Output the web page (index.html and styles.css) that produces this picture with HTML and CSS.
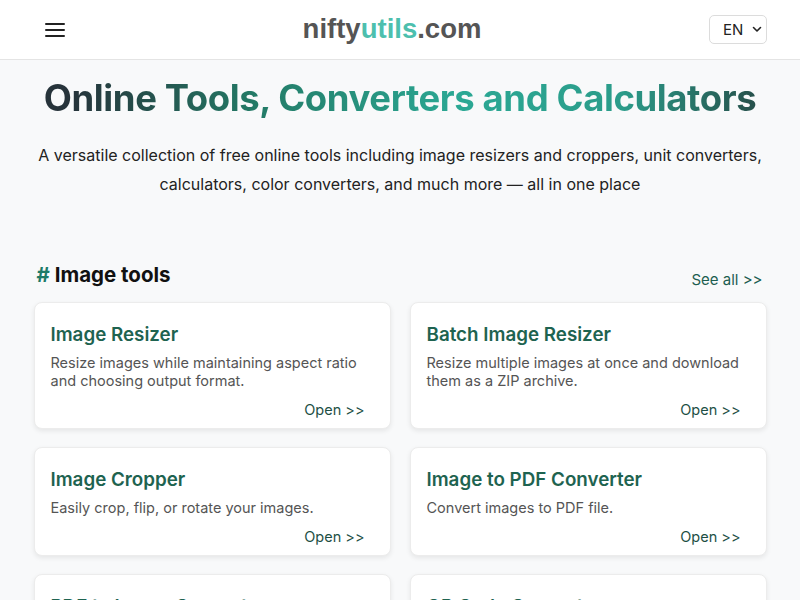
FILE: index.html
```html
<!DOCTYPE html>
<html lang="en">
<head>
  <meta charset="UTF-8" />
  <meta name="viewport" content="width=device-width, initial-scale=1.0"/>
  <title>niftyutils.com - Online Tools, Converters and Calculators</title>
  <link rel="stylesheet" href="styles.css">
</head>
<body>

  <!-- Top bar -->
  <header class="topbar">
    <button class="menu-btn" aria-label="Menu">
      <svg width="20" height="16" viewBox="0 0 20 16">
        <path d="M1 2h18M1 8h18M1 14h18" stroke="#222" stroke-width="2" stroke-linecap="round"/>
      </svg>
    </button>
    <a class="logo" href="#">nifty<span>utils</span>.com</a>
    <div class="lang">
      EN
      <svg width="10" height="7" viewBox="0 0 10 7">
        <path d="M1.5 1.5L5 5l3.5-3.5" fill="none" stroke="#222" stroke-width="1.6" stroke-linecap="round" stroke-linejoin="round"/>
      </svg>
    </div>
  </header>

  <main class="container">
    <section class="hero">
      <h1>Online Tools, Converters and Calculators</h1>
      <p>A versatile collection of free online tools including image resizers and croppers, unit converters, calculators, color converters, and much more — all in one place</p>
    </section>

    <section class="tools">
      <div class="tools-head">
        <h2><span class="hash">#</span> Image tools</h2>
        <a href="#" class="see-all">See all &gt;&gt;</a>
      </div>

      <div class="grid">
        <div class="card">
          <h3>Image Resizer</h3>
          <p>Resize images while maintaining aspect ratio and choosing output format.</p>
          <a href="#" class="open">Open &gt;&gt;</a>
        </div>
        <div class="card">
          <h3>Batch Image Resizer</h3>
          <p>Resize multiple images at once and download them as a ZIP archive.</p>
          <a href="#" class="open">Open &gt;&gt;</a>
        </div>
        <div class="card">
          <h3>Image Cropper</h3>
          <p>Easily crop, flip, or rotate your images.</p>
          <a href="#" class="open">Open &gt;&gt;</a>
        </div>
        <div class="card">
          <h3>Image to PDF Converter</h3>
          <p>Convert images to PDF file.</p>
          <a href="#" class="open">Open &gt;&gt;</a>
        </div>
        <div class="card">
          <h3>PDF to Image Converter</h3>
          <p>Convert PDF pages to images.</p>
          <a href="#" class="open">Open &gt;&gt;</a>
        </div>
        <div class="card">
          <h3>QR Code Generator</h3>
          <p>Create QR codes for links and text.</p>
          <a href="#" class="open">Open &gt;&gt;</a>
        </div>
      </div>
    </section>
  </main>

</body>
</html>
```

FILE: styles.css
```css
body {
  font-family: Inter, "Noto Sans", sans-serif;
  margin: 0;
  padding: 0;
  background: #f8f9fa;
  color: #222;
}
a {
  text-decoration: none;
}

/* header */
.topbar {
  height: 59px;
  background: #fff;
  border-bottom: 1px solid #e4e4e4;
  display: flex;
  align-items: center;
  justify-content: space-between;
  padding: 0 33px 0 45px;
}
.menu-btn {
  background: none;
  border: 0;
  padding: 0;
  width: 20px;
  height: 16px;
  display: flex;
}
.logo {
  font-family: "Liberation Sans", Arial, sans-serif;
  font-weight: bold;
  font-size: 27.5px;
  color: #555;
  margin-left: 10px;
  margin-top: -2px;
}
.logo span {
  color: #4dbfae;
}
.lang {
  width: 58px;
  height: 29px;
  box-sizing: border-box;
  border: 1px solid #dcdcdc;
  border-radius: 5px;
  display: flex;
  align-items: center;
  gap: 9px;
  padding-left: 13px;
  font-size: 15px;
  color: #222;
}

/* page */
.container {
  width: 733px;
  margin: 0 auto;
}
.hero {
  text-align: center;
}
.hero h1 {
  margin: 16px 0 0;
  font-size: 36.5px;
  font-weight: 700;
  line-height: 44px;
  letter-spacing: -0.4px;
  background: linear-gradient(90deg, #26333a 5%, #237a66 30%, #2ba894 58%, #2b9c8a 80%, #264a46 100%);
  -webkit-background-clip: text;
  background-clip: text;
  color: transparent;
}
.hero p {
  margin: 21px -12px 0;
  font-size: 16px;
  line-height: 29px;
  color: #222;
}

/* tools section */
.tools {
  margin-top: 63px;
}
.tools-head {
  display: flex;
  justify-content: space-between;
  align-items: flex-end;
  padding: 0 4px 0 3px;
}
.tools-head h2 {
  margin: 0;
  font-size: 20.5px;
  font-weight: 700;
  line-height: 26px;
  color: #111;
}
.hash {
  color: #1c7a68;
}
.see-all {
  font-size: 15px;
  color: #1d5e50;
  line-height: 20px;
  margin-bottom: -2px;
}
.grid {
  margin-top: 14px;
  display: grid;
  grid-template-columns: 1fr 1fr;
  gap: 18px 19px;
}
.card {
  background: #fff;
  border: 1px solid #ececec;
  border-radius: 8px;
  box-shadow: 0 2px 5px rgba(0,0,0,0.08);
  padding: 20px 16px 8px;
  display: flex;
  flex-direction: column;
}
.card h3 {
  margin: 0;
  font-size: 18.8px;
  font-weight: 600;
  line-height: 24px;
  color: #1e6350;
}
.card p {
  margin: 7px 0 0;
  font-size: 14.5px;
  line-height: 18px;
  color: #555;
}
.open {
  align-self: flex-end;
  margin: 10px 9px 0 0;
  font-size: 14.5px;
  line-height: 20px;
  color: #1d4f45;
}
```
